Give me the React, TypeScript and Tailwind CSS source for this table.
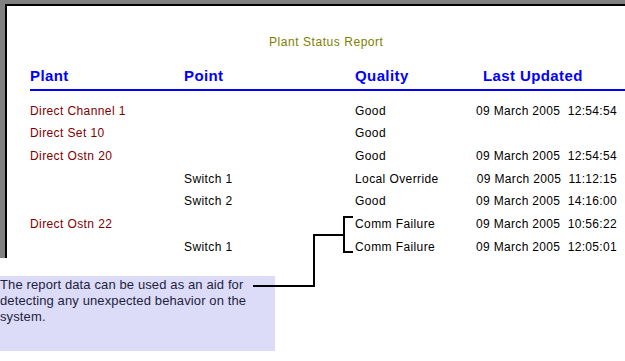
const rows = [
  { plant: 'Direct Channel 1', point: '', quality: 'Good', updated: '09 March 2005  12:54:54' },
  { plant: 'Direct Set 10', point: '', quality: 'Good', updated: '' },
  { plant: 'Direct Ostn 20', point: '', quality: 'Good', updated: '09 March 2005  12:54:54' },
  { plant: '', point: 'Switch 1', quality: 'Local Override', updated: '09 March 2005  11:12:15' },
  { plant: '', point: 'Switch 2', quality: 'Good', updated: '09 March 2005  14:16:00' },
  { plant: 'Direct Ostn 22', point: '', quality: 'Comm Failure', updated: '09 March 2005  10:56:22' },
  { plant: '', point: 'Switch 1', quality: 'Comm Failure', updated: '09 March 2005  12:05:01' },
]

const cols = 'grid grid-cols-[154px_171px_121px_1fr]'

export default function App() {
  return (
    <div className="relative w-[625px] h-[361px] bg-white overflow-hidden font-['Liberation_Sans',Arial,sans-serif]">
      {/* Report window, clipped at the right */}
      <div className="h-[258px] bg-[#808080] pl-[5px] pt-[4px]">
        <div className="h-full bg-white border-l-2 border-t-2 border-black pl-[23px]">
          <div className="mt-[29px] h-[14px] leading-[14px] text-[12px] tracking-[0.55px] text-[#808000] pl-[239px]">
            Plant Status Report
          </div>

          <div className={`${cols} mt-[17px] h-[20px] leading-[20px] text-[15px] font-bold tracking-[0.4px] text-[#0000ff]`}>
            <span>Plant</span>
            <span>Point</span>
            <span>Quality</span>
            <span className="pl-[7px]">Last Updated</span>
          </div>
          <div className="mt-[3px] h-[2px] bg-[#0000ff]" />

          {/* Table body */}
          <div className="mt-[8.67px] text-[12px] tracking-[0.4px] text-black">
            {rows.map((r, i) => (
              <div key={i} className={`${cols} h-[22.67px] leading-[22.67px]`}>
                <span className="text-[#800000]">{r.plant}</span>
                <span>{r.point}</span>
                <span>{r.quality}</span>
                <span className="text-right pr-[8px] whitespace-pre tracking-[0.33px]">{r.updated}</span>
              </div>
            ))}
          </div>
        </div>
      </div>

      {/* Callout note */}
      <div className="mt-[18px] w-[275px] h-[75px] bg-[#dcdcf8] pt-[1px] text-[13px] leading-[16px] tracking-[0.12px] text-[#1e1e40]">
        The report data can be used as an aid for
        <br />
        detecting any unexpected behavior on the
        <br />
        system.
      </div>

      {/* Leader line from the note to the Comm Failure rows */}
      <svg className="absolute inset-0" width="625" height="361" shapeRendering="crispEdges">
        <g fill="#000">
          <rect x="343" y="216" width="2" height="37" />
          <rect x="343" y="216" width="10" height="2" />
          <rect x="343" y="251" width="10" height="2" />
          <rect x="313" y="234" width="32" height="2" />
          <rect x="313" y="234" width="2" height="53" />
          <rect x="253" y="285" width="62" height="2" />
        </g>
      </svg>
    </div>
  )
}
